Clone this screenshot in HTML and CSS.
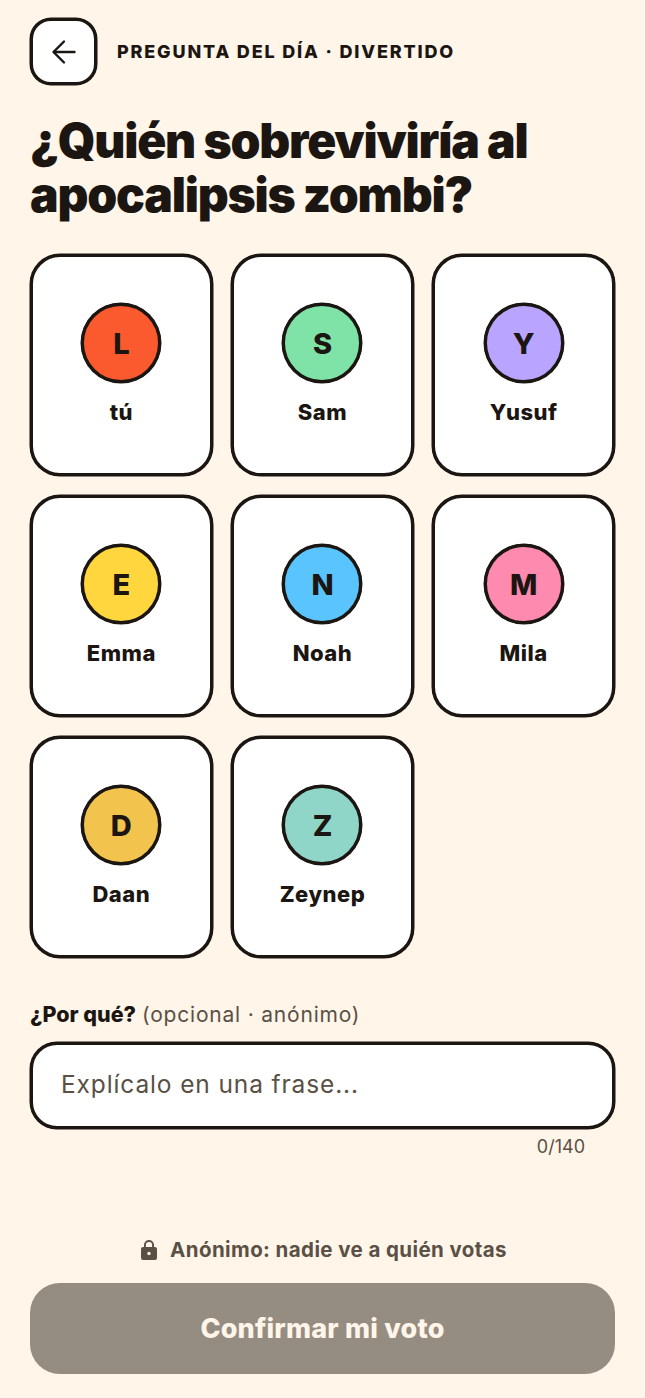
FILE: index.html
```html
<!DOCTYPE html>
<html lang="es">
<head>
    <meta charset="UTF-8">
    <meta name="viewport" content="width=device-width, initial-scale=1.0">
    <title>Pregunta del día</title>
    <link rel="stylesheet" href="styles.css">
</head>
<body>
    <div class="screen">
        <div class="topbar">
            <button class="back-btn" aria-label="Volver">
                <svg width="28" height="28" viewBox="0 0 28 28" fill="none" stroke="#1c1612" stroke-width="2.4" stroke-linecap="round" stroke-linejoin="round">
                    <path d="M24.5 14H4"/>
                    <path d="M14 3.5L3.5 14L14 24.5"/>
                </svg>
            </button>
            <span class="eyebrow">PREGUNTA DEL DÍA · DIVERTIDO</span>
        </div>

        <h1 class="question">¿Quién sobreviviría al apocalipsis zombi?</h1>

        <div class="people">
            <div class="person"><div class="avatar av-l">L</div><div class="name">tú</div></div>
            <div class="person"><div class="avatar av-s">S</div><div class="name">Sam</div></div>
            <div class="person"><div class="avatar av-y">Y</div><div class="name">Yusuf</div></div>
            <div class="person"><div class="avatar av-e">E</div><div class="name">Emma</div></div>
            <div class="person"><div class="avatar av-n">N</div><div class="name">Noah</div></div>
            <div class="person"><div class="avatar av-m">M</div><div class="name">Mila</div></div>
            <div class="person"><div class="avatar av-d">D</div><div class="name">Daan</div></div>
            <div class="person"><div class="avatar av-z">Z</div><div class="name">Zeynep</div></div>
        </div>

        <div class="why-label"><strong>¿Por qué?</strong> <span>(opcional · anónimo)</span></div>
        <div class="why-input">Explícalo en una frase...</div>
        <div class="counter">0/140</div>

        <div class="bottom">
            <div class="anon-note">
                <svg width="16" height="20" viewBox="0 0 16 20">
                    <path fill="#5a5045" fill-rule="evenodd" d="M3 7V5a5 5 0 0 1 10 0v2h1a2 2 0 0 1 2 2v9a2 2 0 0 1-2 2H2a2 2 0 0 1-2-2V9a2 2 0 0 1 2-2zm1.9 0h6.2V5a3.1 3.1 0 0 0-6.2 0zM8 11.8a1.7 1.7 0 1 0 0 3.4 1.7 1.7 0 0 0 0-3.4z"/>
                </svg>
                <span>Anónimo: nadie ve a quién votas</span>
            </div>
            <button class="confirm-btn">Confirmar mi voto</button>
        </div>
    </div>
</body>
</html>
```

FILE: styles.css
```css
* {
    margin: 0;
    padding: 0;
    box-sizing: border-box;
}

body {
    font-family: Inter, 'Liberation Sans', sans-serif;
    background: #fff5e9;
    color: #1c1612;
}

.screen {
    height: 1398px;
    padding: 18px 30px 24px;
    display: flex;
    flex-direction: column;
}

.topbar {
    display: flex;
    align-items: center;
    gap: 20px;
}

.back-btn {
    width: 67px;
    height: 67px;
    background: white;
    border: 3px solid #1c1612;
    box-shadow: 0 0 0 0.5px #1c1612;
    border-radius: 21px;
    display: flex;
    align-items: center;
    justify-content: center;
}

.eyebrow {
    font-size: 18px;
    font-weight: 800;
    letter-spacing: 1.83px;
}

.question {
    margin-top: 29px;
    font-size: 48px;
    line-height: 54px;
    font-weight: 900;
    letter-spacing: -1.2px;
}

.people {
    margin-top: 32px;
    display: grid;
    grid-template-columns: repeat(3, 1fr);
    grid-auto-rows: 222px;
    column-gap: 18.5px;
    row-gap: 19px;
}

.person {
    background: white;
    border: 3px solid #1c1612;
    box-shadow: 0 0 0 0.5px #1c1612;
    border-radius: 30px;
    display: flex;
    flex-direction: column;
    align-items: center;
    padding-top: 46px;
}

.avatar {
    width: 80px;
    height: 80px;
    border: 3px solid #1c1612;
    box-shadow: 0 0 0 0.5px #1c1612;
    border-radius: 50%;
    display: flex;
    align-items: center;
    justify-content: center;
    font-size: 29px;
    font-weight: 800;
}

.av-l { background: #fa5a2d; }
.av-s { background: #7fe3a8; }
.av-y { background: #b9a5ff; }
.av-e { background: #ffd63d; }
.av-n { background: #5ac4ff; }
.av-m { background: #ff8ab0; }
.av-d { background: #f2c44d; }
.av-z { background: #8fd6c8; }

.name {
    margin-top: 16px;
    font-size: 22px;
    line-height: 26px;
    font-weight: 800;
    letter-spacing: 0.5px;
}

.why-label {
    margin-top: 43px;
    font-size: 21px;
    line-height: 26px;
}

.why-label strong {
    font-size: 21.5px;
    font-weight: 800;
}

.why-label span {
    color: #5a5045;
    letter-spacing: 0.8px;
}

.why-input {
    margin-top: 14px;
    height: 87px;
    background: white;
    border: 3px solid #1c1612;
    box-shadow: 0 0 0 0.5px #1c1612;
    border-radius: 27px;
    padding: 0 28px 3px;
    display: flex;
    align-items: center;
    font-size: 24.5px;
    letter-spacing: 0.87px;
    color: #5a5045;
}

.counter {
    margin-top: 8px;
    padding-right: 30px;
    text-align: right;
    font-size: 18px;
    line-height: 20px;
    color: #5a5045;
}

.bottom {
    margin-top: auto;
}

.anon-note {
    display: flex;
    align-items: center;
    justify-content: center;
    gap: 13px;
    padding-left: 3px;
    font-size: 20.5px;
    font-weight: 700;
    letter-spacing: 0.4px;
    color: #5a5045;
}

.confirm-btn {
    margin-top: 21px;
    width: 100%;
    height: 91px;
    background: #968d82;
    border: none;
    border-radius: 30px;
    font-family: inherit;
    font-size: 27px;
    font-weight: 800;
    letter-spacing: 0.2px;
    color: #fff5e9;
}
```
